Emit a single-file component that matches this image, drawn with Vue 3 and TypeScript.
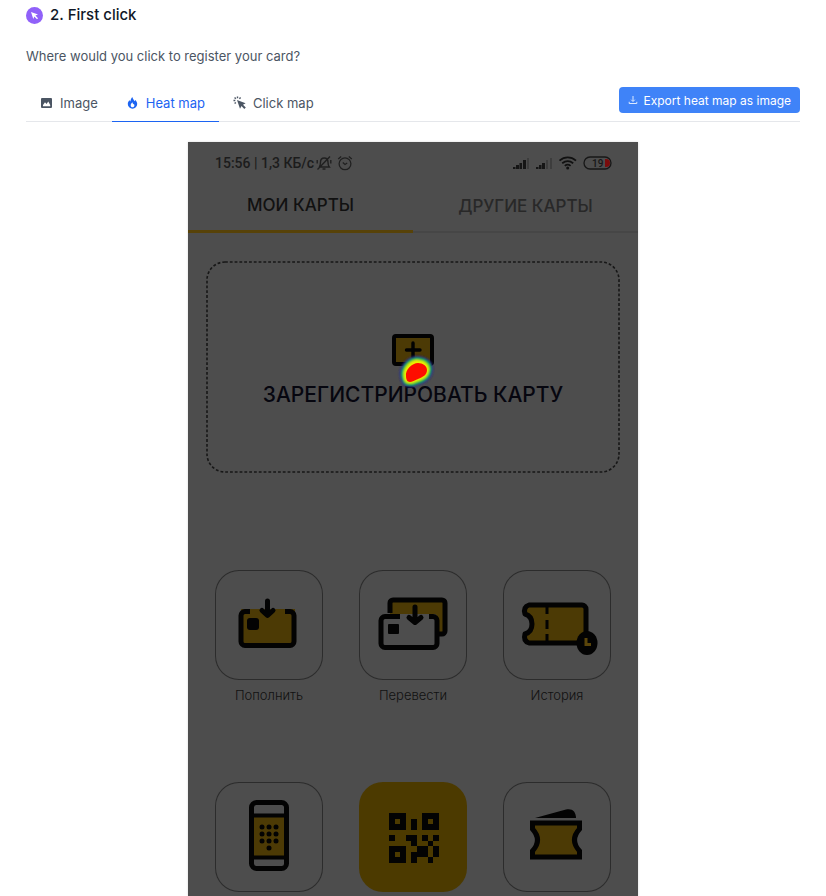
<script setup lang="ts">
import { ref } from 'vue'

type ViewId = 'image' | 'heat' | 'click'
type ActionIcon = 'topup' | 'transfer' | 'history' | 'phone' | 'qr' | 'wallet'

const view = ref<ViewId>('heat')
const views: { id: ViewId; label: string }[] = [
  { id: 'image', label: 'Image' },
  { id: 'heat', label: 'Heat map' },
  { id: 'click', label: 'Click map' },
]

const actions: { icon: ActionIcon; label?: string }[] = [
  { icon: 'topup', label: 'Пополнить' },
  { icon: 'transfer', label: 'Перевести' },
  { icon: 'history', label: 'История' },
  { icon: 'phone' },
  { icon: 'qr' },
  { icon: 'wallet' },
]

const qrRows = [
  '111000111',
  '101010101',
  '111010111',
  '000000000',
  '100110101',
  '000010010',
  '111001101',
  '101011101',
  '111010010',
]
const qrCells = qrRows.flatMap((row, y) =>
  [...row].map((c, x) => ({ x, y, on: c === '1' })).filter((c) => c.on),
)

const keypad = [
  [0, 0], [7, 0], [14, 0],
  [0, 7], [7, 7], [14, 7],
  [0, 14], [7, 14], [14, 14],
  [7, 21],
]
</script>

<template>
  <main class="page">
    <header class="title-row">
      <svg class="badge" viewBox="0 0 17 17" aria-hidden="true">
        <circle cx="8.500" cy="8.500" r="8.500" fill="#9061f9" />
        <path d="M5 5l7 2.500-2.600 1 2.600 2.700-1 1-2.700-2.700-1 2.500z" fill="#fff" />
      </svg>
      <h1>2. First click</h1>
    </header>
    <p class="question">Where would you click to register your card?</p>

    <div class="toolbar">
      <nav class="views">
        <button
          v-for="v in views"
          :key="v.id"
          type="button"
          class="view"
          :class="{ active: view === v.id }"
          @click="view = v.id"
        >
          <svg v-if="v.id === 'image'" viewBox="0 0 13 13" aria-hidden="true">
            <path fill-rule="evenodd" d="M2 2h9a1 1 0 0 1 1 1v8a1 1 0 0 1-1 1H2a1 1 0 0 1-1-1V3a1 1 0 0 1 1-1zM3 10.200h7.200V9L8.300 5.500 6.500 8 5 6.200 3 9z" fill="currentColor" />
          </svg>
          <svg v-else-if="v.id === 'heat'" viewBox="0 0 13 13" aria-hidden="true">
            <path fill-rule="evenodd" d="M6.300 1C6.700 3 8 3.600 8.300 5.200L9.300 4C10.600 5.300 11.200 6.600 11.200 8a4.700 4.700 0 0 1-9.400 0c0-1.600.7-2.700 1.700-3.700l.9 1.300C4.600 3.700 5.200 2.300 6.300 1zM6.500 6.300C5.300 7.500 4.700 8.300 4.700 9.400c0 1.100.8 1.900 1.800 1.900s1.900-.8 1.900-1.900c0-.6-.3-1.200-.7-1.700l-.6.7z" fill="currentColor" />
          </svg>
          <svg v-else viewBox="0 0 13 13" aria-hidden="true">
            <path d="M4 4l8.600 3.200-2.600 1.500 2.800 2.700-1.500 1.500-2.800-2.800-1.500 2.600z" fill="currentColor" />
            <path d="M4.500.5v1.800M1.600 1.600l1.200 1.200M.5 4.500h1.800M1.600 7.600l1.200-1.200M7.600 1.600L6.400 2.800" stroke="currentColor" stroke-width="1.400" fill="none" />
          </svg>
          <span>{{ v.label }}</span>
        </button>
      </nav>
      <button type="button" class="export">
        <svg viewBox="0 0 10 10" aria-hidden="true">
          <path d="M5 1v5.200M3.200 4.700L5 6.500l1.800-1.800M1.200 6.800v1.700h7.600V6.800" fill="none" stroke="#dbe9ff" />
        </svg>
        <span>Export heat map as image</span>
      </button>
    </div>

    <section class="phone">
      <div class="status">
        <span class="clock">15:56 | 1,3 КБ/с</span>
        <svg class="status-icon" viewBox="0 0 16 16" aria-hidden="true">
          <g fill="none" stroke="#202020" stroke-width="1.400">
            <path d="M3 12h10.300c-1.300-1.500-1.300-3-1.300-4.800C12 4.700 10.500 3 8.300 3S4.500 4.700 4.500 7.200c0 1.800 0 3.300-1.300 4.800M6.500 14h3M1.500 14.500L14 1.500M1.200 5v3.500M14.800 5v3.500" />
          </g>
        </svg>
        <svg class="status-icon alarm" viewBox="0 0 16 16" aria-hidden="true">
          <g fill="none" stroke="#202020" stroke-width="1.300">
            <circle cx="8" cy="8.800" r="5.900" />
            <path d="M1.200 4l3-2.600M14.800 4l-3-2.600M5.800 7.600L8 9.500l2.200-1.500" />
          </g>
        </svg>
        <svg class="signals" viewBox="0 0 100 16" aria-hidden="true">
          <g fill="#151515">
            <path d="M0 14v-2h2.500v2zM3 14v-4h3v4zM6.500 14V8H9v6zM10 14V5h3v9z" />
            <path d="M23 14v-2h2.500v2zM26 14v-4h2.500v4zM29 14V8h3v6z" />
          </g>
          <path d="M14 14V3h2v11zM33 14V5h2v9zM37 14V3h2v11z" fill="#3d3d3d" />
          <g fill="none" stroke="#111" stroke-width="1.800">
            <path d="M46.500 5.600c5-4.200 11.500-4.200 16.500 0M49.200 8.300c3.500-2.800 7.600-2.800 11 0M51.800 10.900c1.800-1.500 4-1.500 5.800 0" />
          </g>
          <circle cx="54.700" cy="13" r="1.500" fill="#111" />
          <rect x="71" y="2" width="27" height="12" rx="6" fill="none" stroke="#171717" stroke-width="1.300" />
          <path d="M92 4h1a4 4 0 0 1 0 8h-1z" fill="#7a0c0c" />
          <text x="79" y="12" class="battery">19</text>
        </svg>
      </div>

      <nav class="phone-tabs">
        <button type="button" class="phone-tab current">МОИ КАРТЫ</button>
        <button type="button" class="phone-tab">ДРУГИЕ КАРТЫ</button>
      </nav>

      <button type="button" class="register">
        <svg class="outline" aria-hidden="true">
          <rect width="100%" height="100%" rx="18" fill="none" stroke="#171717" stroke-width="1.600" stroke-dasharray="2.800 2" />
        </svg>
        <span class="card-wrap">
          <svg class="card" viewBox="0 0 42 32" aria-hidden="true">
            <rect x="2" y="2" width="38" height="28" rx="2" fill="#4c3a05" stroke="#020202" stroke-width="4" />
            <path d="M21 9v14M14.500 16h13.500" stroke="#020202" stroke-width="3.400" stroke-linecap="round" />
          </svg>
          <svg class="heat" viewBox="0 0 40 40" aria-hidden="true">
            <defs>
              <filter id="soft" x="-30%" y="-30%" width="160%" height="160%">
                <feGaussianBlur stdDeviation="0.900" />
              </filter>
              <filter id="soft-core" x="-30%" y="-30%" width="160%" height="160%">
                <feGaussianBlur stdDeviation="0.500" />
              </filter>
            </defs>
            <g filter="url(#soft)">
              <path d="M4 25C2 16 10 4 21 4c9 0 16 5 16 13 0 9-7 14-14 16-4 1-7 3-10 2-5 0-8-4-9-10z" fill="#2b2b90" />
              <path d="M6 25C4 17 12 6 21 6c8 0 14 4 14 11 0 8-6 12-12 14-4 1-6 3-10 2-4 0-6-3-7-8z" fill="#00c425" />
              <path d="M8 25C6 18 13 8 21 8c7 0 12 4 12 9 0 7-5 10-11 12-3 1-6 3-9 2-3 0-5-2-5-6z" fill="#eef000" />
            </g>
            <path d="M10 24c-1-6 6-13 12-13 5 0 9 3 9 7 0 5-4 7-9 9-3 1-6 3-8 3-3 0-4-3-4-6z" fill="#fe1000" filter="url(#soft-core)" />
          </svg>
        </span>
        <span class="register-label">ЗАРЕГИСТРИРОВАТЬ КАРТУ</span>
      </button>

      <div class="actions">
        <button
          v-for="a in actions"
          :key="a.icon"
          type="button"
          class="action"
          :aria-label="a.label"
        >
          <span class="tile" :class="{ filled: a.icon === 'qr' }">
            <svg viewBox="0 0 108 110" aria-hidden="true">
              <g v-if="a.icon === 'topup'">
                <rect x="26" y="39" width="54" height="36" fill="#4c3a05" />
                <path d="M35 41.500h-5a4 4 0 0 0-4 4v26a4 4 0 0 0 4 4h45a4 4 0 0 0 4-4v-26a4 4 0 0 0-4-4h-5" fill="none" stroke="#030303" stroke-width="5" />
                <rect x="32" y="48" width="12" height="12" rx="3" fill="#030303" />
                <path d="M52.500 31v14M47 40.500l5.500 5 5.500-5" class="arrow" />
              </g>
              <g v-else-if="a.icon === 'transfer'">
                <path d="M31 45V33a3 3 0 0 1 3-3h49a3 3 0 0 1 3 3v28a3 3 0 0 1-3 3h-5V45z" fill="#4c3a05" />
                <path d="M31 43V33a3 3 0 0 1 3-3h49a3 3 0 0 1 3 3v28a3 3 0 0 1-3 3h-4" fill="none" stroke="#030303" stroke-width="5" />
                <rect x="22" y="44" width="56" height="34" rx="3" fill="#4d4d4d" />
                <path d="M41 46.500H26a4 4 0 0 0-4 4v23a4 4 0 0 0 4 4h48a4 4 0 0 0 4-4v-23a4 4 0 0 0-4-4h-4" fill="none" stroke="#030303" stroke-width="5" />
                <rect x="29" y="54" width="11" height="10" rx="1" fill="#030303" />
                <path d="M56 37v14M50 47.500l6 5 6-5" class="arrow" />
              </g>
              <g v-else-if="a.icon === 'history'">
                <path d="M26 35h53a4 4 0 0 1 4 4v30a4 4 0 0 1-4 4H26q-6-2-4-9 7-2 7-10t-7-10q-2-7 4-9z" fill="#4c3a05" stroke="#030303" stroke-width="5" stroke-linejoin="round" />
                <path d="M44 36v8M44 50v9M44 64v8" stroke="#030303" stroke-width="3" />
                <ellipse cx="84" cy="73" rx="10.500" ry="12" fill="#030303" />
                <path d="M83 68v6.500h5" fill="none" stroke="#5a450a" stroke-width="3" />
              </g>
              <g v-else-if="a.icon === 'phone'">
                <rect x="36.500" y="20.500" width="35" height="66" rx="5" fill="#4d4d4d" stroke="#030303" stroke-width="5" />
                <rect x="39" y="35" width="30" height="39" fill="#4c3a05" />
                <path d="M37 33.500h34M37 75.500h34" stroke="#030303" stroke-width="4" />
                <circle v-for="k in keypad" :key="`${k[0]}-${k[1]}`" :cx="47 + k[0]" :cy="45 + k[1]" r="2.500" fill="#030303" />
              </g>
              <g v-else-if="a.icon === 'qr'" transform="translate(30 31) scale(5.500)" shape-rendering="crispEdges">
                <rect v-for="c in qrCells" :key="`${c.x}-${c.y}`" :x="c.x" :y="c.y" width="1" height="1" fill="#030303" />
              </g>
              <g v-else>
                <path d="M32 36l31-8.500c6-1.500 10 2 10 8.500z" fill="#030303" />
                <path d="M29.500 41h47v6q-10 11 0 22v6h-47v-6q10-11 0-22z" fill="#4c3a05" stroke="#030303" stroke-width="5" />
              </g>
            </svg>
          </span>
          <span v-if="a.label" class="action-label">{{ a.label }}</span>
        </button>
      </div>
    </section>
  </main>
</template>

<style>
body {
  margin: 0;
  background: #fff;
}
</style>

<style scoped>
* {
  box-sizing: border-box;
}
button {
  margin: 0;
  padding: 0;
  border: 0;
  background: none;
  font: inherit;
  color: inherit;
  cursor: pointer;
}
svg {
  display: block;
  flex: none;
}
.page {
  padding: 4px 26px 0;
  font-family: Inter, sans-serif;
  color: #4b5563;
}
.title-row {
  display: flex;
  align-items: center;
  gap: 7px;
  height: 22px;
}
.badge {
  width: 17px;
  height: 17px;
}
h1 {
  margin: 0;
  font-size: 15px;
  line-height: 22px;
  font-weight: 500;
  color: #111827;
}
.question {
  margin: 20px 0;
  font-size: 13px;
  line-height: 20px;
}
.toolbar {
  display: flex;
  justify-content: space-between;
  align-items: flex-start;
  height: 36px;
  border-bottom: 1px solid #e5e7eb;
}
.views {
  display: flex;
}
.view {
  display: flex;
  align-items: center;
  gap: 7px;
  height: 36px;
  padding: 0 14px 2px;
  border-bottom: 1px solid transparent;
  font-size: 13px;
}
.view svg {
  width: 13px;
  height: 13px;
}
.view.active {
  color: #1c64f2;
  border-bottom-color: #1c64f2;
}
.export {
  display: flex;
  align-items: center;
  gap: 6px;
  height: 26px;
  margin-top: 1px;
  padding: 0 9px;
  border-radius: 4px;
  background: #3f83f8;
  color: #fff;
  font-size: 12px;
}
.export svg {
  width: 10px;
  height: 10px;
}
.phone {
  width: 100%;
  max-width: 450px;
  margin: 20px auto 0;
  padding-bottom: 4px;
  background: #4d4d4d;
  box-shadow: 0 0 2px #d5d5d5;
  color: #111;
}
.status {
  display: flex;
  align-items: center;
  height: 42px;
  padding: 0 25px 0 27px;
}
.clock {
  margin-right: 2px;
  font: 500 14px/20px Roboto, sans-serif;
  color: #1c1c1c;
}
.status-icon {
  width: 16px;
  height: 16px;
}
.alarm {
  margin-left: 5px;
}
.signals {
  width: 100px;
  height: 16px;
  margin-left: auto;
}
.battery {
  font: 500 10px Roboto, sans-serif;
  fill: #171717;
}
.phone-tabs {
  display: grid;
  grid-template-columns: 1fr 1fr;
}
.phone-tab {
  height: 49px;
  padding-bottom: 4px;
  border-bottom: 2px solid #464646;
  font-size: 17px;
  font-weight: 500;
  color: #282828;
}
.phone-tab.current {
  border-bottom: 3px solid #574208;
  color: #111;
}
.register {
  position: relative;
  display: flex;
  flex-direction: column;
  align-items: center;
  width: calc(100% - 38px);
  height: 210px;
  margin: 29px 19px 0;
  padding-top: 72px;
}
.outline {
  position: absolute;
  inset: 0;
  width: 100%;
  height: 100%;
  overflow: visible;
}
.card-wrap {
  position: relative;
}
.card {
  width: 42px;
  height: 32px;
}
.heat {
  position: absolute;
  left: 4px;
  top: 18px;
  width: 40px;
  height: 40px;
}
.register-label {
  margin-top: 17px;
  font-size: 21px;
  line-height: 24px;
  font-weight: 500;
  color: #06060f;
  white-space: nowrap;
}
.actions {
  display: grid;
  grid-template-columns: repeat(3, minmax(0, 1fr));
  column-gap: 36px;
  row-gap: 77px;
  padding: 98px 27px 0;
}
.action {
  display: flex;
  flex-direction: column;
  align-items: center;
}
.tile {
  display: flex;
  justify-content: center;
  width: 100%;
  height: 110px;
  border-radius: 24px;
  box-shadow: inset 0 0 0 1px #2c2c2c;
}
.tile.filled {
  background: #4c3a00;
  box-shadow: none;
}
.tile svg {
  width: 108px;
  height: 110px;
}
.arrow {
  fill: none;
  stroke: #030303;
  stroke-width: 5;
  stroke-linecap: round;
  stroke-linejoin: round;
}
.action-label {
  margin-top: 5px;
  font-size: 13px;
  line-height: 20px;
  font-weight: 300;
  color: #111;
}
</style>
